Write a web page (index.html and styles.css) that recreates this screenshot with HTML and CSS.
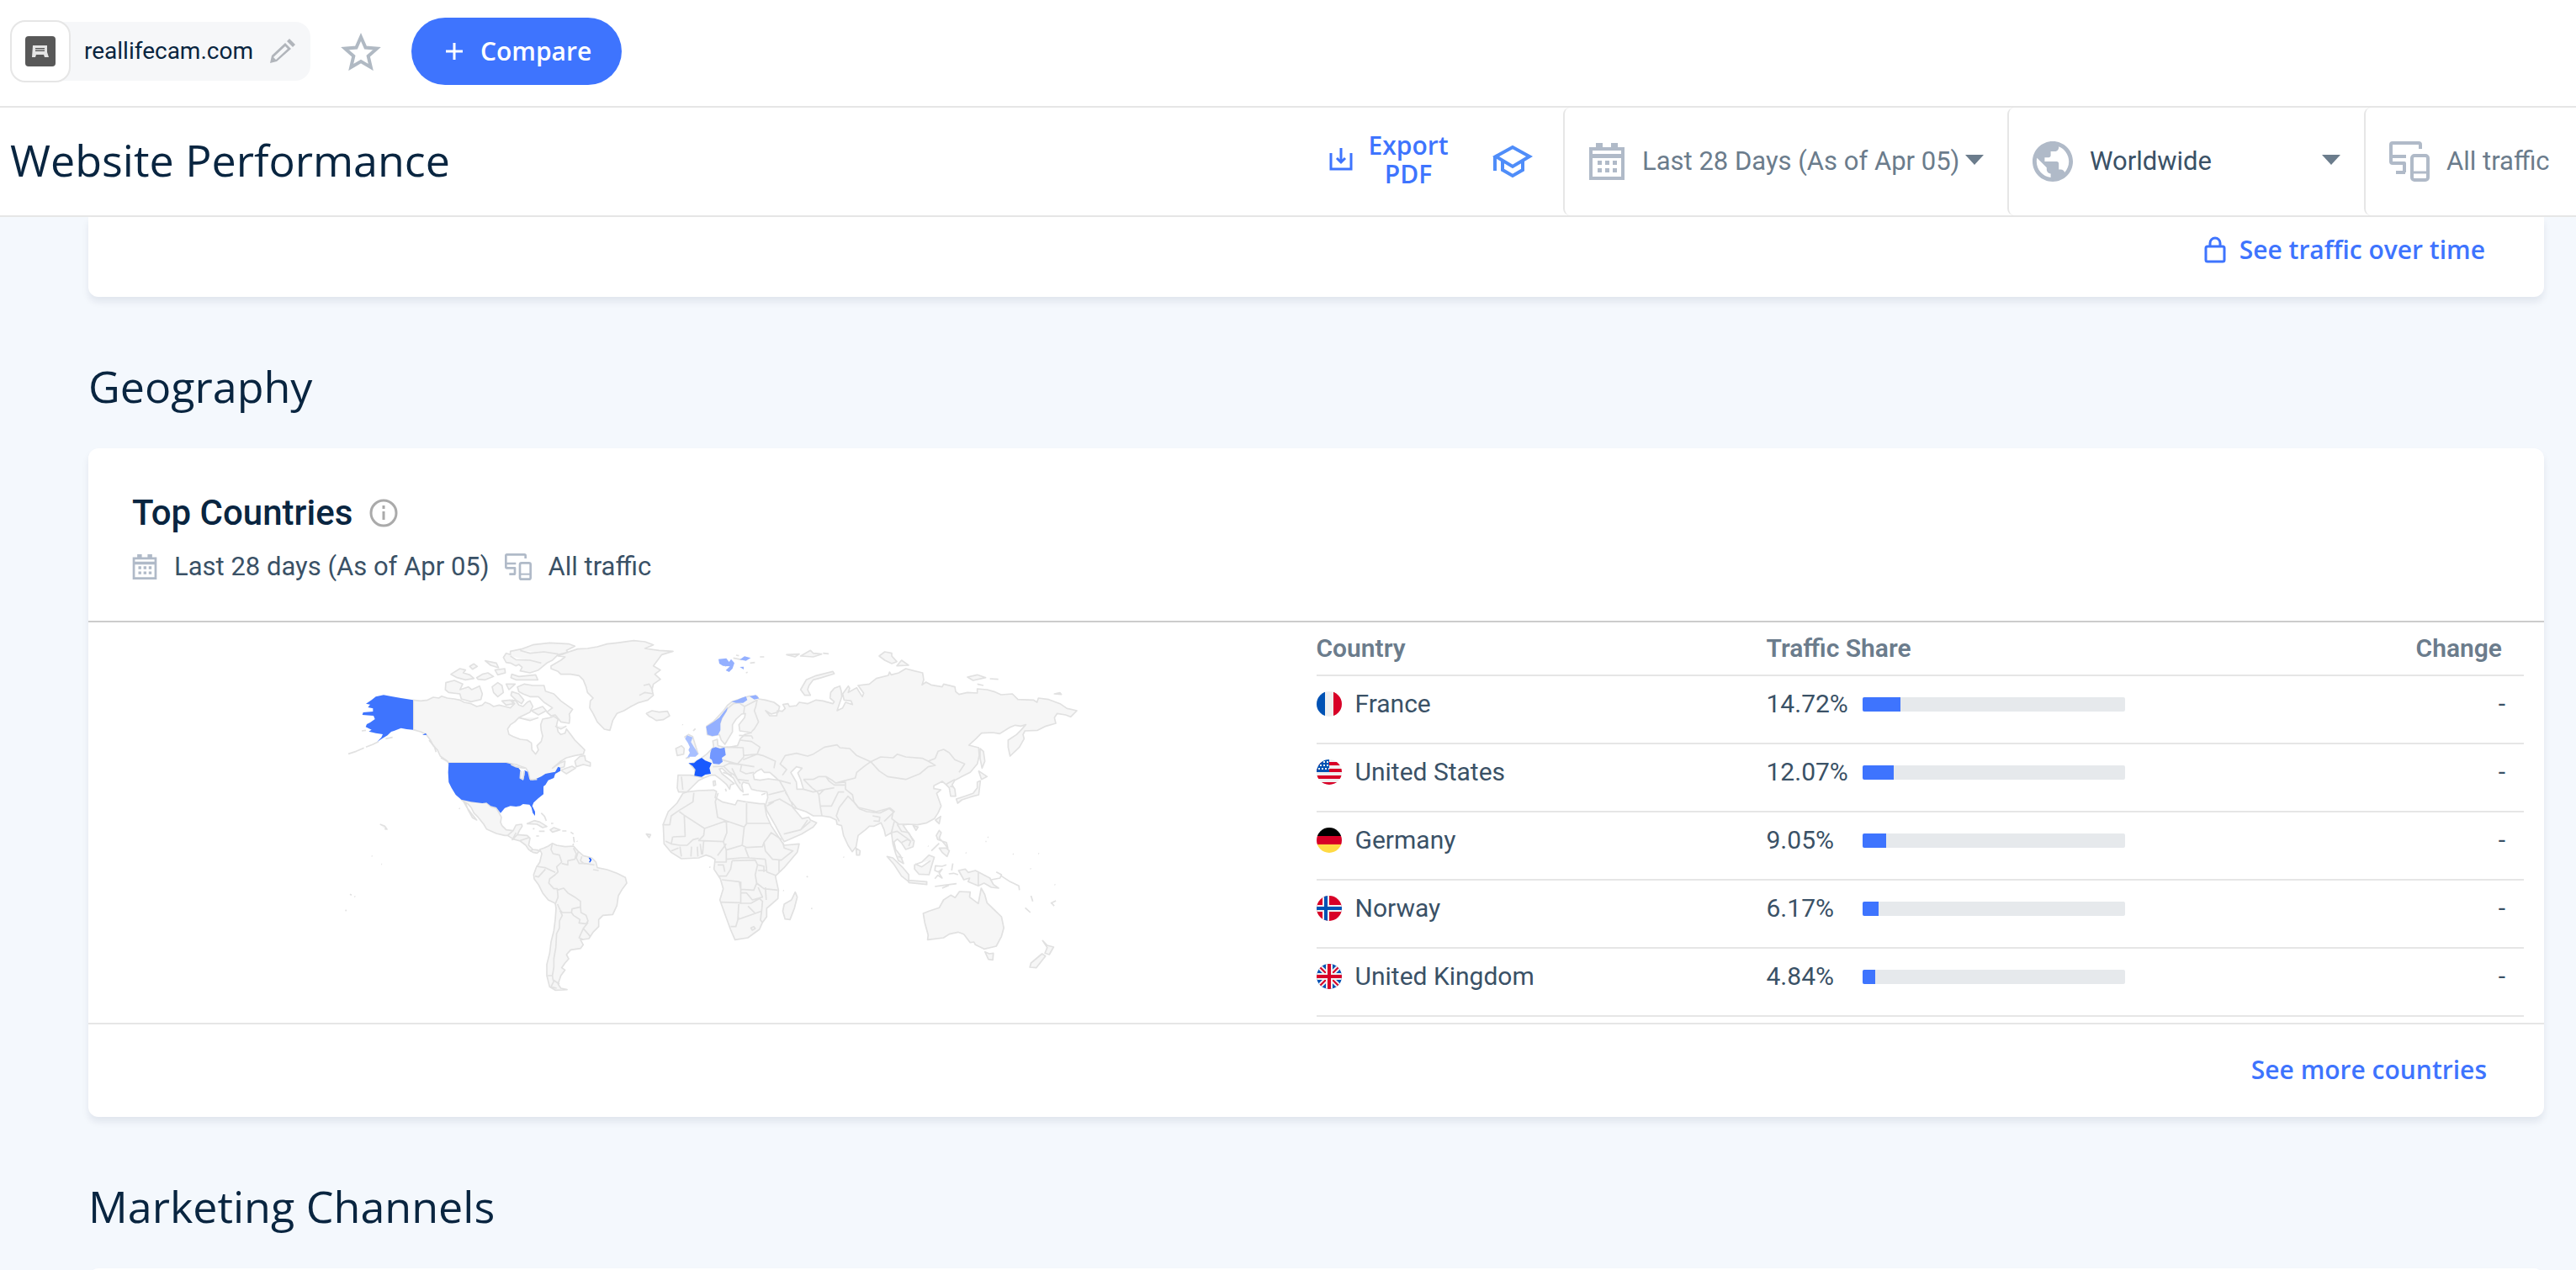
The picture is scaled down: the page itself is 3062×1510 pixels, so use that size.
FILE: index.html
```html
<!DOCTYPE html>
<html lang="en">
<head>
    <meta charset="UTF-8">
    <meta name="viewport" content="width=device-width, initial-scale=1.0">
    <title>Website Performance</title>
    <link rel="stylesheet" href="styles.css">
</head>
<body>

<!-- Shared icons -->
<svg class="sprite" aria-hidden="true">
    <symbol id="icon-calendar" viewBox="0 0 44 44">
        <path fill-rule="evenodd" d="M1 5h8V0h8v5h10V0h8v5h8v39H1zM5 9v4h34V9zM5 18v22h34V18z"/>
        <path d="M11 21h5v5h-5zM20 21h5v5h-5zM29 21h5v5h-5zM11 30h5v5h-5zM20 30h5v5h-5zM29 30h5v5h-5z"/>
    </symbol>
    <symbol id="icon-devices" viewBox="0 0 48 48">
        <path fill="none" stroke="currentColor" stroke-width="4" stroke-linejoin="round" d="M37 9V4a2 2 0 0 0-2-2H4a2 2 0 0 0-2 2v20a2 2 0 0 0 2 2h14v11M2 18h18M8 37h11"/>
        <rect x="27" y="17" width="19" height="29" rx="3" fill="none" stroke="currentColor" stroke-width="4"/>
        <path fill="none" stroke="currentColor" stroke-width="3" d="M27 37h19"/>
    </symbol>
</svg>

<div class="page">
    <header class="topbar">
        <div class="site">
            <span class="site-logo">
                <svg width="36" height="36" viewBox="0 0 36 36">
                    <rect width="36" height="36" rx="4" fill="#585858"/>
                    <path fill="#e4e4e4" fill-rule="evenodd" d="M9 11h17v8l2 6h-5l-1-3h-9l-1 3H8zM12 14v4h11v-4z"/>
                    <path fill="#aaa" d="M12 15h11v2H12z"/>
                </svg>
            </span>
            <span class="site-name">reallifecam.com</span>
            <button type="button" class="icon-button" aria-label="Edit website">
                <svg width="30" height="30" viewBox="0 0 30 30" fill="#b1b5bb">
                    <path fill-rule="evenodd" d="M0 29l2-9L18 5l7 7L8 27zM4 22l3 3L21 12l-3-3z"/>
                    <path d="M20 3l3-3 7 7-3 3z"/>
                </svg>
            </button>
        </div>
        <button type="button" class="icon-button" aria-label="Add to favorites">
            <svg width="48" height="46" viewBox="0 0 48 46" fill="none" stroke="#b0b9c3" stroke-width="4">
                <path d="M24 6l5.500 12.500 13.500 1.200-10.300 9 3.100 13.300L24 35l-11.800 7 3.100-13.300L5 19.700l13.500-1.200z"/>
            </svg>
        </button>
        <button type="button" class="compare">
            <svg width="22" height="22" viewBox="0 0 22 22" stroke="#fff" stroke-width="3"><path d="M11 1v20M1 11h20"/></svg>
            Compare
        </button>
    </header>

    <div class="subbar">
        <h1>Website Performance</h1>
        <button type="button" class="export">
            <svg width="28" height="28" viewBox="0 0 28 28" fill="none" stroke="#3e74fe" stroke-width="3"><path d="M2 6v19h24V6M14 0v17M9 12l5 5 5-5"/></svg>
            <span>Export PDF</span>
        </button>
        <button type="button" class="icon-button learn" aria-label="Academy">
            <svg width="48" height="40" viewBox="0 0 48 40" fill="none" stroke="#4f8df9" stroke-width="4"><path d="M24 3L4 14l20 12 20-12zM12 19v11l12 7 12-7V19M3 14v17"/></svg>
        </button>
        <div class="filter filter-date">
            <svg class="filter-icon" width="44" height="44"><use href="#icon-calendar"/></svg>
            <select aria-label="Date range">
                <option>Last 28 Days (As of Apr 05)</option>
            </select>
            <svg class="caret" width="22" height="12" viewBox="0 0 22 12"><path d="M0 0h22L11 12z"/></svg>
        </div>
        <div class="filter filter-country">
            <svg class="filter-icon" width="48" height="48" viewBox="2 2 20 20"><path d="M12 2C6.480 2 2 6.480 2 12s4.480 10 10 10 10-4.480 10-10S17.520 2 12 2zm-1 17.930c-3.950-.490-7-3.850-7-7.930 0-.620.080-1.210.210-1.790L9 15v1c0 1.100.9 2 2 2v1.930zm6.900-2.540c-.260-.810-1-1.390-1.900-1.390h-1v-3c0-.550-.450-1-1-1H8v-2h2c.550 0 1-.450 1-1V7h2c1.100 0 2-.9 2-2v-.410c2.930 1.190 5 4.060 5 7.410 0 2.080-.8 3.970-2.100 5.390z"/></svg>
            <select aria-label="Country">
                <option>Worldwide</option>
            </select>
            <svg class="caret" width="22" height="12" viewBox="0 0 22 12"><path d="M0 0h22L11 12z"/></svg>
        </div>
        <div class="filter filter-traffic">
            <svg class="filter-icon" width="48" height="48"><use href="#icon-devices"/></svg>
            <button type="button">All traffic</button>
        </div>
    </div>

    <main>
        <section class="card card-scrolled">
            <div class="card-footer">
                <a href="#">
                    <svg width="26" height="32" viewBox="0 0 26 32" fill="none" stroke="#3e74fe" stroke-width="3"><rect x="2" y="12" width="22" height="18" rx="2"/><path d="M7 12V8a6 6 0 0 1 12 0v4"/></svg>
                    See traffic over time
                </a>
            </div>
        </section>

        <h2>Geography</h2>
        <section class="card">
            <div class="card-header">
                <h3>
                    Top Countries
                    <svg width="34" height="34" viewBox="0 0 34 34" fill="none" stroke="#aaa" stroke-width="3"><circle cx="17" cy="17" r="15"/><path d="M17 15v10M17 8v4"/></svg>
                </h3>
                <p class="card-info">
                    <svg class="info-icon" width="30" height="30"><use href="#icon-calendar"/></svg>
                    <span>Last 28 days (As of Apr 05)</span>
                    <svg class="info-icon" width="32" height="32"><use href="#icon-devices"/></svg>
                    <span>All traffic</span>
                </p>
            </div>

            <div class="card-body">
                <svg class="map" viewBox="-45 -15 2700 1380" role="img" aria-label="Traffic by country">
                    <!-- North America -->
                    <path d="M274 262L300 265 325 262 345 252 365 255 375 248 395 255 420 258 440 262 455 270 480 275 500 285 520 280 530 270 545 275 560 285 580 280 600 285 620 290 635 275 625 262 640 265 650 280 665 285 680 270 690 265 700 285 690 305 670 315 650 325 635 340 620 350 610 365 615 385 630 392 655 402 680 405 695 415 697 440 710 455 720 440 715 425 730 410 735 390 730 370 728 350 735 330 760 325 775 320 790 330 785 350 790 375 800 385 815 380 820 365 835 385 850 405 870 425 885 440 880 455 850 460 820 468 800 480 770 505 800 485 815 480 812 500 798 505 785 520 755 525 735 537 715 545 690 548 685 520 675 505 640 492 610 486 400 486 395 480 370 462 360 440 345 425 335 405 320 385 300 375 274 368Z"/>
                    <path d="M595 110L605 95 620 100 620 88 660 80 700 65 760 58 830 62 850 70 820 85 825 92 790 100 770 120 750 130 720 155 690 165 655 158 662 145 650 135 640 140 620 130 605 128ZM655 85L690 95 740 90 790 98M620 105L640 118 690 120 730 130M625 170L650 178 710 172 718 190 640 190 622 182ZM645 215L670 205 700 210 740 210 745 230 775 240 800 265 842 295 830 312 832 325 830 345 800 340 780 315 765 318 750 305 770 290 740 270 720 250 690 250 665 240 650 232ZM390 200L420 192 450 205 440 225 470 215 482 225 510 212 520 240 515 260 480 268 445 258 440 240 400 235 388 225ZM408 170L440 150 460 155 452 165 475 172 490 185 460 190 430 182ZM475 142L490 133 502 142 485 152ZM530 122L570 130 578 147 550 138ZM500 182L520 170 540 165 560 178 530 190 505 188ZM565 155L600 150 602 165 575 172ZM555 215L575 200 590 210 595 235 575 250 560 235ZM605 205L637 205 615 225ZM590 265L620 262 632 275 605 280ZM625 232L650 240 668 262 660 275 640 262 622 245ZM695 300L735 285 748 300 720 315ZM650 325L690 335 720 325M780 355L800 365 820 355"/>
                    <path d="M765 140L800 120 815 108 790 105 835 88 860 80 895 78 930 72 965 62 1000 58 1060 50 1100 54 1130 65 1100 78 1150 85 1200 88 1160 100 1145 120 1130 140 1155 155 1135 170 1155 188 1130 205 1125 225 1130 245 1110 262 1075 272 1050 285 1025 300 1000 310 985 335 975 370 955 366 930 340 915 310 903 290 905 265 915 255 895 235 890 215 880 190 865 175 835 170 800 170 790 160 765 150ZM1080 245L1100 235 1130 240M1095 210L1115 205 1128 228"/>
                    <path d="M850 480L868 463 885 460 888 478 905 485 905 498 880 492 855 500ZM800 512L820 505 840 498 852 505 820 525 812 520ZM372 468L395 480 405 494M330 405L350 430 355 448"/>
                    <path d="M445 617L480 625 520 628 535 628 550 642 570 648 580 665 588 680 585 698 590 710 605 725 630 728 640 708 660 705 662 712 652 728 645 742 680 745 690 755 685 780 700 795 715 797 725 800 715 808 700 805 685 795 675 780 655 765 630 758 610 745 600 745 570 738 535 722 525 705 505 680 490 665 480 645 468 632 455 625ZM450 618L465 645 480 665 500 690 485 682 470 655 462 635ZM610 745L630 728M640 735L630 755M645 742L625 762M650 765L688 752M700 795L690 802"/>
                    <path d="M155 705L172 712 180 723 172 722M42 454L70 445 98 433M105 430L130 420 150 410M175 400L200 395M90 372L105 370"/>
                    <g class="lit lit-us">
                        <path d="M273 262L230 255 200 250 168 244 140 250 125 262 105 275 120 278 112 288 130 292 130 303 95 306 92 315 132 318 137 330 120 342 108 348 104 358 125 368 115 374 140 380 165 384 160 395 145 411 162 400 182 388 195 375 205 372 230 362 250 366 273 368Z"/>
                        <path d="M306 387L318 380 322 386Z"/>
                        <path d="M400 486L605 486 628 492 640 500 650 505 660 520 655 540 665 548 670 530 670 512 682 518 688 545 700 548 730 535 745 525 780 518 790 500 798 503 798 515 780 525 775 540 755 548 745 565 738 570 738 598 720 612 703 628 698 640 708 660 708 675 700 665 695 645 688 635 665 633 655 640 640 642 620 640 600 647 585 665 570 645 550 640 535 628 520 630 480 625 445 617 425 600 410 575 400 555 398 520Z"/>
                    </g>
                    <path d="M622 492L640 500 655 503 672 505M657 515L655 540 665 545 670 515M690 546L715 545"/>

                    <!-- Caribbean and South America -->
                    <g transform="translate(0 645)">
                        <path d="M680 58L705 47 725 52 750 68 735 72 715 60ZM762 80L775 72 797 80 770 88ZM722 85L742 85M805 84L820 84M730 20L742 32 748 48M765 57L773 57M700 76L706 76M712 102L722 102M835 88L845 95M845 105L848 125M857 120L859 122M846 130L842 135M125 173L128 174M160 202L162 203M48 310L54 313M64 317L67 319M31 367L36 368M437 3L440 5"/>
                        <path d="M725 150L740 145 755 138 770 128 785 135 815 140 845 138 860 155 880 172 910 180 925 195 930 215 965 222 1000 235 1030 250 1035 270 1020 290 1005 315 1000 350 985 382 950 385 935 400 935 425 915 445 900 468 870 472 880 490 870 503 835 508 820 525 828 540 815 555 803 572 815 580 800 600 795 615 790 630 800 645 822 650 780 652 760 640 750 600 750 560 760 520 765 480 775 440 780 400 783 360 780 342 755 330 735 305 720 275 705 255 703 240 712 215 725 195 732 165Z"/>
                        <path class="border" d="M770 128L765 150 772 165 795 170 803 195 785 212 790 230 780 240 760 255 757 270 775 290 787 290 790 320 780 345M712 210L745 215 780 232M745 220L720 248 708 245M787 295L810 288 825 305 850 320 870 335 870 355 840 362 838 375 805 375 797 365 788 345M870 355L872 375 890 385 897 405 890 415 865 412 868 400 845 385 838 375M797 368L805 385 795 405 795 430 785 450 782 500 775 540 775 570 770 600 752 600M770 600L772 615 795 630M897 410L880 432 905 460M880 432L865 465 880 472M803 200L825 205 825 190 850 185 855 165 845 145M862 158L855 180 865 200 885 200 920 205M875 175L870 190 885 202M915 222L935 225M775 620L765 640 785 645"/>
                        <path class="lit lit-fr" d="M899 179L905 180 910 187 905 196 900 196 904 188Z"/>
                        <path d="M1105 95L1120 97 1115 108ZM1330 213L1332 214"/>
                    </g>

                    <!-- Europe and Asia -->
                    <path d="M1320 355L1345 338 1380 300 1395 280 1410 268 1440 258 1470 248 1500 248 1505 258 1530 262 1560 270 1580 285 1575 305 1550 312 1530 300 1545 318 1570 318 1572 300 1590 302 1600 292 1592 278 1610 275 1615 285 1640 282 1650 270 1680 275 1710 262 1735 265 1770 275 1775 268 1760 255 1762 235 1775 220 1795 212 1800 230 1802 250 1790 285 1785 300 1805 290 1815 270 1840 278 1835 265 1810 262 1805 240 1825 212 1830 220 1825 235 1855 218 1862 230 1875 250 1880 238 1860 210 1900 205 1925 185 1968 174 1972 162 1978 172 2005 165 2030 150 2060 158 2090 165 2094 190 2088 208 2102 198 2120 208 2160 215 2165 205 2205 215 2208 232 2220 242 2250 235 2285 237 2285 222 2320 225 2345 232 2370 243 2410 240 2430 260 2485 262 2498 270 2503 255 2540 260 2580 275 2605 292 2640 300 2618 322 2600 315 2570 310 2560 325 2565 345 2530 355 2500 370 2455 372 2448 385 2452 400 2435 430 2402 462 2395 430 2395 405 2425 385 2440 370 2458 350 2440 355 2420 352 2400 360 2365 382 2340 378 2300 380 2280 400 2255 423 2290 432 2292 460 2285 490 2260 520 2230 535 2205 548 2195 565 2205 580 2208 605 2190 605 2185 575 2172 562 2160 552 2130 568 2130 578 2155 582 2140 595 2156 640 2145 665 2132 685 2105 700 2072 707 2041 705 2020 708 2035 730 2060 765 2056 785 2030 795 2015 772 2000 758 1988 768 1994 795 2010 815 2022 845 2004 835 1994 810 1984 775 1979 735 1958 747 1953 725 1942 700 1917 712 1900 712 1886 725 1860 745 1853 785 1839 803 1824 780 1808 745 1801 710 1785 705 1782 690 1762 680 1731 675 1700 675 1674 660 1643 650 1622 625 1627 645 1648 670 1660 685 1684 680 1690 690 1712 700 1700 715 1658 740 1596 767 1586 750 1565 710 1534 655 1530 635 1538 610 1535 590 1500 585 1480 580 1470 560 1450 555 1445 565 1450 590 1440 582 1425 560 1415 540 1395 525 1375 505 1365 508 1375 525 1400 545 1418 560 1405 565 1402 580 1390 562 1370 545 1350 530 1335 530 1310 540 1290 550 1270 570 1250 590 1220 590 1215 575 1218 530 1260 530 1278 532 1278 510 1260 490 1275 485 1300 470 1320 455 1335 440 1345 430 1342 408 1358 402 1360 425 1380 430 1400 430 1430 425 1440 400 1455 385 1480 378 1438 372 1435 350 1455 325 1458 310 1445 312 1425 330 1412 350 1412 375 1400 395 1385 420 1372 405 1365 385 1340 390 1322 385Z"/>
                    <path class="sea" d="M1490 545L1486 527 1500 515 1515 508 1525 520 1545 520 1568 540 1576 548 1540 543 1510 548ZM1620 520L1640 500 1660 505 1645 522 1655 545 1665 580 1642 580 1640 555Z"/>
                    <path class="border" d="M1368 345L1375 325 1395 292 1415 275 1435 272 1455 285 1452 310M1455 285L1500 262 1495 285 1490 300 1505 340 1490 365 1480 375M1435 388L1480 390 1485 400M1440 405L1480 410 1510 430 1500 455 1450 460M1390 430L1450 432 1452 465 1430 490 1375 475M1450 475L1500 455 1520 460 1565 480 1560 505M1430 490L1490 500M1445 490L1440 515 1460 525 1488 520M1342 500L1380 498 1400 488 1435 492M1380 498L1400 518 1420 530 1440 560M1410 505L1430 545 1470 550M1230 535L1235 582M1275 532L1310 540M1590 530L1605 510 1582 490 1600 460 1640 452 1680 462 1700 455 1740 430 1785 422 1795 432 1830 435 1855 460 1905 482 1880 500 1855 520 1850 540 1810 550 1780 558 1770 550 1745 535 1720 535 1700 545 1665 545M1905 482L1940 465 1985 468 2000 455 2030 465 2090 470 2110 480 2135 495 2110 500 2080 525 2030 545 1965 535 1935 515ZM2110 480L2135 470 2145 445 2165 438 2185 450 2205 475 2240 490 2220 520M2175 562L2205 545M2188 570L2200 572M1780 558L1815 555 1815 580 1840 600 1845 625 1860 645 1925 660 1970 648 1985 660 1980 685 2005 705 2040 705M1745 535L1755 550 1775 565 1812 565M1665 580L1700 590 1745 580 1775 575M1540 600L1580 590 1600 585 1620 625M1580 550L1600 585M1576 548L1620 560M1720 600L1725 640 1731 675M1725 640L1765 640 1790 590 1810 590M1665 545L1695 575 1715 590 1720 600 1740 580M1540 630L1580 615 1640 650M1600 590L1610 605 1620 625M1535 640L1560 625M1595 740L1655 725 1690 695M1655 725L1680 690"/>
                    <g class="border" transform="translate(1080 585) scale(1.033 1)">
                        <path d="M690 60L720 20 740 40 760 65 785 75 830 80M690 60L680 90 690 110M805 90L830 95 828 110 808 108M830 80L865 62 880 75 845 110M880 110L870 150 890 145 910 160 935 178M890 120L905 145 930 150 945 180M905 185L925 175 937 180 930 198M893 235L910 240"/>
                    </g>
                    <g transform="translate(900 0)">
                        <path d="M205 310L225 300 250 305 280 302 288 318 265 332 240 335 225 325 215 320ZM310 435L330 425 340 435 338 455 315 460ZM333 349L335 351M372 372L380 364M345 470L360 466M340 395L355 385 370 392 385 440 390 455"/>
                        <path d="M755 225L775 190 810 175 870 160 875 168 830 182 800 190 785 210 780 225 790 245 770 245ZM705 100L750 98 735 108ZM755 105L790 85 800 95 830 98 800 108ZM835 95L855 97M525 102L535 104M575 130L592 128M560 165L566 163M610 108L625 108M443 552L450 550 452 565 445 568ZM487 578L490 588M548 600L570 598M615 600L630 595M478 520L510 530M485 142L500 135M515 112L545 118"/>
                        <path class="lit lit-uk" d="M343 400L350 388 370 395 364 412 374 428 382 440 390 455 380 464 360 464 350 468 360 450 355 440 360 430 353 415Z"/>
                        <path class="lit lit-fr" d="M355 487L375 487 385 478 402 468 415 478 438 487 430 505 435 525 415 528 402 536 376 532 380 510 370 497Z"/>
                        <path class="lit lit-de" d="M438 435L452 430 468 435 484 431 488 458 474 468 477 482 465 491 443 489 438 475 431 470 433 450Z"/>
                        <path class="lit lit-no" d="M418 357L445 340 465 325 480 305 495 287 491 302 475 327 469 345 469 370 460 387 440 391 423 385ZM508 268L530 261 545 254 560 249 565 262 550 272 525 272ZM573 249L595 244 607 256 590 260ZM462 116L490 113 500 126 507 116 519 130 512 150 500 162 488 156 503 142 478 140 465 132ZM538 118L555 106 577 112 560 122ZM538 144L552 143 552 153Z"/>
                    </g>
                    <g transform="translate(1740 0)">
                        <path d="M195 105L215 90 240 95 240 105 258 125 240 132 215 120ZM258 140L275 120 300 138ZM510 180L545 172 575 182 530 192ZM590 186L620 188M545 205L567 210M820 240L840 236 845 242ZM555 435L567 445 572 480 562 505 555 470ZM550 515L580 535 560 545ZM545 555L556 550 550 600 520 608 490 618 475 630 470 615 500 605 530 595 545 575ZM400 695L412 680 408 700Z"/>
                    </g>

                    <!-- Africa -->
                    <path d="M1235 595L1250 590 1290 585 1345 583 1355 588 1350 610 1375 625 1422 636 1430 620 1460 625 1510 632 1526 632 1534 675 1550 710 1576 750 1596 780 1650 775 1643 805 1596 860 1565 890 1576 940 1574 970 1534 1005 1534 1035 1519 1055 1508 1080 1467 1110 1421 1117 1405 1080 1385 1025 1367 975 1379 935 1369 900 1346 865 1350 830 1333 820 1317 815 1292 825 1230 828 1193 805 1168 775 1165 705 1183 660 1214 630Z"/>
                    <g class="border" transform="translate(1080 585) scale(1.033 1)">
                        <path d="M188 8L185 40 138 70 110 90 105 122 80 122M138 75L155 88 225 135 300 108 270 95 262 40 272 8M155 88L158 163 115 165M300 108L362 130 370 118 370 45M370 117L450 117M225 135L222 160 205 178 290 182 302 150 300 108M290 182L300 212 355 195 362 130M355 195L370 203 425 200 430 185 445 165 455 150 492 175M430 185L435 215 460 245 490 248 530 215 500 205 495 185M482 250L482 290M435 245L440 290 470 302M222 180L218 228M300 190L270 232M300 210L300 255 262 255M300 245L350 240 378 240 365 205M378 240L435 245M320 250L400 248 408 265 400 300 405 330 395 355 350 352 345 325 285 318M320 250L315 280 300 305 275 305M350 325L350 400 280 398M350 365L370 365 390 390 425 380 410 345M410 285L440 285M405 330L430 350 478 355M435 345L438 390M345 402L385 402 415 385 425 395 422 430 400 438 375 412M343 405L340 460 400 438M343 450L333 485 315 485M422 430L418 462 425 470M385 490L395 485 400 492 390 498ZM115 165L110 190 140 195 165 195 185 175 205 170M140 200L145 235M180 200L178 235M200 200L202 235M210 190L215 228M110 215L135 205M90 180L110 190M270 265L290 265 295 290M410 265L430 270 430 290"/>
                    </g>

                    <!-- Indian Ocean, Oceania -->
                    <g transform="translate(1080 585) scale(1.033 1)">
                        <path d="M500 405L525 390 538 362 545 380 535 420 520 460 503 458 495 430ZM1022 105L1040 92 1035 118ZM945 125L962 130 955 142ZM748 205L762 215 760 230 750 230ZM855 235L875 240 910 275 930 300 930 325 905 305 880 265ZM928 320L992 325 992 335 930 328ZM950 265L975 255 1000 230 1018 238 1010 265 1000 300 965 298 950 280ZM952 262L975 272 1005 250"/>
                        <path class="line" d="M1060 265L1045 270 1022 268 1020 285 1032 290 1045 280 1035 295 1045 312 1030 302 1020 314M1020 342L1050 338 1095 332M1045 348L1068 338M1082 260L1078 285M1068 297L1085 295 1100 300M1232 290L1250 300 1245 312 1215 318M1250 305L1280 325 1310 340 1312 355M1008 215L1035 188M1332 418L1350 435M1352 375L1358 395M1420 402L1438 393M1422 400L1432 412"/>
                        <path d="M1025 160L1035 142 1042 150 1035 170 1045 180 1060 185 1065 205 1045 180 1030 175ZM1035 205L1060 205 1070 215 1062 235 1045 220ZM1102 285L1125 280 1135 292 1160 285 1210 312 1222 335 1240 348 1215 345 1190 330 1170 340 1135 325 1140 312 1120 318ZM1170 290L1170 340"/>
                        <path d="M980 438L1000 430 1035 418 1050 390 1075 373 1090 382 1105 360 1142 362 1140 380 1170 403 1180 348 1192 370 1200 400 1230 430 1250 450 1258 490 1250 520 1232 555 1190 565 1160 550 1155 540 1142 542 1120 512 1100 505 1070 512 1050 525 995 532 997 515 985 470ZM1193 575L1208 582 1222 580 1220 604 1205 602ZM1392 535L1408 552 1430 558 1415 585 1400 580 1408 560ZM1390 582L1402 590 1370 632 1348 630 1352 615Z"/>
                        <path d="M1202 166L1205 167M1195 181L1198 182M1289 226L1292 227M1377 224L1380 225M1349 278L1352 279M1433 335L1436 336M1126 222L1129 223M593 420L597 421M496 356L499 357M577 306L582 308M704 237L707 238M242 273L245 274M996 198L998 199"/>
                    </g>
                </svg>

                <div class="table-wrap">
                    <table>
                        <thead>
                            <tr>
                                <th class="col-country">Country</th>
                                <th>Traffic Share</th>
                                <th class="col-change">Change</th>
                            </tr>
                        </thead>
                        <tbody>
                            <tr>
                                <td>
                                    <div class="country">
                                        <svg class="flag" viewBox="0 0 30 30"><path fill="#f0f0f0" d="M0 0h30v30H0z"/><path fill="#0052b4" d="M0 0h10v30H0z"/><path fill="#d80027" d="M20 0h10v30H20z"/></svg>
                                        France
                                    </div>
                                </td>
                                <td><div class="share"><span>14.72%</span><div class="bar"><div class="bar-fill" style="width: 14.72%"></div></div></div></td>
                                <td class="col-change">-</td>
                            </tr>
                            <tr>
                                <td>
                                    <div class="country">
                                        <svg class="flag" viewBox="0 0 30 30"><path fill="#f0f0f0" d="M0 0h30v30H0z"/><path fill="#d80027" d="M0 3h30v4H0zM0 11h30v4H0zM0 19h30v4H0zM0 27h30v3H0z"/><path fill="#0052b4" d="M0 0h15v15H0z"/><path stroke="#f0f0f0" stroke-width="2" stroke-dasharray="2 2" d="M8 3h7M4 7h11M2 11h13"/></svg>
                                        United States
                                    </div>
                                </td>
                                <td><div class="share"><span>12.07%</span><div class="bar"><div class="bar-fill" style="width: 12.07%"></div></div></div></td>
                                <td class="col-change">-</td>
                            </tr>
                            <tr>
                                <td>
                                    <div class="country">
                                        <svg class="flag" viewBox="0 0 30 30"><path d="M0 0h30v10H0z"/><path fill="#d80027" d="M0 10h30v10H0z"/><path fill="#ffda44" d="M0 20h30v10H0z"/></svg>
                                        Germany
                                    </div>
                                </td>
                                <td><div class="share"><span>9.05%</span><div class="bar"><div class="bar-fill" style="width: 9.05%"></div></div></div></td>
                                <td class="col-change">-</td>
                            </tr>
                            <tr>
                                <td>
                                    <div class="country">
                                        <svg class="flag" viewBox="0 0 30 30"><path fill="#d80027" d="M0 0h30v30H0z"/><path stroke="#f0f0f0" stroke-width="8" d="M11 0v30M0 15h30"/><path stroke="#0052b4" stroke-width="4" d="M11 0v30M0 15h30"/></svg>
                                        Norway
                                    </div>
                                </td>
                                <td><div class="share"><span>6.17%</span><div class="bar"><div class="bar-fill" style="width: 6.17%"></div></div></div></td>
                                <td class="col-change">-</td>
                            </tr>
                            <tr>
                                <td>
                                    <div class="country">
                                        <svg class="flag" viewBox="0 0 30 30"><path fill="#0052b4" d="M0 0h30v30H0z"/><path stroke="#f0f0f0" stroke-width="6" d="M0 0l30 30M30 0L0 30"/><path stroke="#d80027" stroke-width="2" d="M0 0l30 30M30 0L0 30"/><path stroke="#f0f0f0" stroke-width="8" d="M15 0v30M0 15h30"/><path stroke="#d80027" stroke-width="4" d="M15 0v30M0 15h30"/></svg>
                                        United Kingdom
                                    </div>
                                </td>
                                <td><div class="share"><span>4.84%</span><div class="bar"><div class="bar-fill" style="width: 4.84%"></div></div></div></td>
                                <td class="col-change">-</td>
                            </tr>
                        </tbody>
                    </table>
                </div>
            </div>

            <div class="card-footer">
                <a href="#">See more countries</a>
            </div>
        </section>

        <h2>Marketing Channels</h2>
        <section class="card card-next"></section>
    </main>
</div>

</body>
</html>
```

FILE: styles.css
```css
* {
    box-sizing: border-box;
}
body {
    margin: 0;
    font-family: Roboto, Arial, sans-serif;
    font-size: 30px;
    line-height: 36px;
    background-color: #f4f8fd;
    color: #092540;
}
h1, h2, h3, p {
    margin: 0;
}
button, select {
    font: inherit;
    color: inherit;
    border: none;
    background: none;
    padding: 0;
    cursor: pointer;
}
svg {
    display: block;
    flex-shrink: 0;
}
.sprite {
    display: none;
}
.page {
    height: 100vh;
    overflow: hidden;
}

/* Top bars */
.topbar {
    display: flex;
    align-items: center;
    gap: 36px;
    height: 128px;
    padding: 0 12px 4px;
    background-color: #fff;
    border-bottom: 2px solid #e6e6e6;
}
.site {
    display: flex;
    align-items: center;
    height: 70px;
    padding-right: 18px;
    border-radius: 18px;
    background-color: #f6f7f9;
    font-size: 28px;
}
.site-logo {
    display: flex;
    align-items: center;
    justify-content: center;
    width: 72px;
    height: 74px;
    border: 2px solid #e6e6e6;
    border-radius: 18px;
    background-color: #fff;
}
.site-name {
    margin: 0 20px 0 16px;
}
.compare {
    display: flex;
    align-items: center;
    gap: 20px;
    height: 80px;
    padding: 0 36px 0 40px;
    border-radius: 40px;
    background-color: #3e74fe;
    color: #fff;
    font-family: "Open Sans", sans-serif;
    font-size: 30px;
    font-weight: 600;
}
.subbar {
    display: flex;
    align-items: center;
    height: 130px;
    padding-left: 12px;
    background-color: #fff;
    border-bottom: 2px solid #e6e6e6;
}
h1, h2 {
    font-family: "Open Sans", sans-serif;
    font-size: 52px;
    font-weight: 500;
    line-height: 60px;
}
h1 {
    margin-right: auto;
    padding-bottom: 4px;
}
.export {
    display: flex;
    align-items: center;
    gap: 16px;
    width: 144px;
    margin-right: 50px;
    padding-bottom: 4px;
    color: #3e74fe;
    font-family: "Open Sans", sans-serif;
    font-size: 30px;
    font-weight: 600;
    line-height: 34px;
}
.learn {
    margin-right: 36px;
}
.filter {
    display: flex;
    align-items: center;
    height: 100%;
    padding: 0 28px;
    border-left: 2px solid #e6e6e6;
    border-radius: 8px;
    color: #6b7c8c;
    font-size: 31px;
}
.filter select {
    flex: 1;
    min-width: 0;
    appearance: none;
}
.filter-icon {
    margin-right: 20px;
    fill: #b0bac8;
    color: #b0bac8;
}
.caret {
    margin-bottom: 4px;
    fill: #6b7c8c;
}
.filter-date {
    width: 528px;
}
.filter-country {
    width: 424px;
}
.filter-country select {
    color: #3a5166;
}
.filter-traffic {
    width: 252px;
}

/* Content */
main {
    padding: 0 38px 0 105px;
}
h2 {
    padding: 76px 0 44px;
}
.card {
    border-radius: 12px;
    background-color: #fff;
    box-shadow: 0 6px 8px rgba(14, 30, 62, 0.08);
}
.card-scrolled {
    border-top-left-radius: 0;
    border-top-right-radius: 0;
}
.card-scrolled .card-footer {
    height: 95px;
    padding: 0 70px 18px;
    border: none;
}
.card-next {
    height: 400px;
}
.card-header {
    padding: 52px 52px 46px;
    border-bottom: 2px solid #ccc;
}
h3 {
    display: flex;
    align-items: center;
    gap: 20px;
    font-size: 42px;
    font-weight: 500;
    line-height: 50px;
}
.card-info {
    display: flex;
    align-items: center;
    margin-top: 21px;
    color: #3a5166;
    font-size: 31px;
}
.card-info span {
    margin-right: 18px;
}
.info-icon {
    margin-right: 20px;
    fill: #b0bac8;
    color: #b0bac8;
}
.card-body {
    display: grid;
    grid-template-columns: 1fr 1fr;
    align-items: start;
}
.card-footer {
    display: flex;
    align-items: center;
    justify-content: flex-end;
    height: 112px;
    padding: 0 68px 2px;
    border-top: 2px solid #e6e6e6;
}
.card-footer a {
    display: flex;
    align-items: center;
    gap: 16px;
    color: #3e74fe;
    font-family: "Open Sans", sans-serif;
    font-size: 30px;
    font-weight: 600;
    text-decoration: none;
}

/* World map */
.map {
    justify-self: center;
    width: 900px;
    fill: #f6f6f6;
    stroke: #e1e1e1;
    stroke-width: 5;
    stroke-linejoin: round;
}
.map .border, .map .line {
    fill: none;
}
.map .sea {
    fill: #fff;
}
.map .lit {
    stroke: none;
}
.map .lit-fr {
    fill: #195afe;
}
.map .lit-us {
    fill: #3e74fe;
}
.map .lit-de {
    fill: #7297ff;
}
.map .lit-no {
    fill: #94b0ff;
}
.map .lit-uk {
    fill: #a9c0ff;
}

/* Countries table */
.table-wrap {
    padding: 0 24px 7px 0;
}
table {
    width: 100%;
    border-collapse: separate;
    border-spacing: 0;
}
th {
    padding: 13px 0;
    border-bottom: 2px solid #e6e6e6;
    color: #6b7c8c;
    font-size: 30px;
    font-weight: 600;
    text-align: left;
}
td {
    padding: 15px 0 28px;
    border-bottom: 2px solid #e6e6e6;
    color: #3a5166;
}
.col-country {
    width: 535px;
}
th.col-change {
    padding-right: 26px;
    text-align: right;
}
td.col-change {
    padding-right: 22px;
    text-align: right;
}
.country, .share {
    display: flex;
    align-items: center;
}
.flag {
    width: 30px;
    height: 30px;
    margin-right: 16px;
    border-radius: 50%;
}
.share span {
    width: 114px;
}
.bar {
    width: 312px;
    height: 17px;
    border-radius: 2px;
    overflow: hidden;
    background-color: #e6e9ec;
}
.bar-fill {
    height: 100%;
    background-color: #3e74fe;
}
```
